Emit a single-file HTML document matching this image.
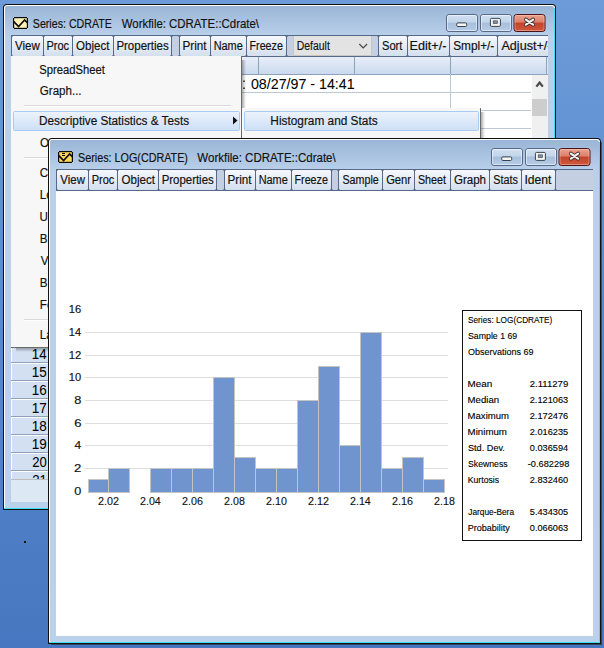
<!DOCTYPE html><html><head><meta charset="utf-8"><style>html,body{margin:0;padding:0;width:604px;height:648px;overflow:hidden;background:#5a8acd}svg{display:block}text{font-family:"Liberation Sans", sans-serif;white-space:pre}</style></head><body>
<svg width="604" height="648" viewBox="0 0 604 648">
<defs>
<linearGradient id="desk" x1="0" y1="0" x2="0" y2="1"><stop offset="0" stop-color="#6d9bd9"/><stop offset="1" stop-color="#4677c0"/></linearGradient>
<linearGradient id="frameg" x1="0" y1="0" x2="0" y2="1" gradientUnits="objectBoundingBox"><stop offset="0" stop-color="#9ab5d6"/><stop offset="0.06" stop-color="#b9d0ea"/><stop offset="1" stop-color="#b9d1ea"/></linearGradient>
<linearGradient id="capg" x1="0" y1="0" x2="0" y2="1"><stop offset="0" stop-color="#d3e1f1"/><stop offset="0.45" stop-color="#c2d5ea"/><stop offset="0.5" stop-color="#a6bfdc"/><stop offset="1" stop-color="#b7cce6"/></linearGradient>
<linearGradient id="closeg" x1="0" y1="0" x2="0" y2="1"><stop offset="0" stop-color="#eba592"/><stop offset="0.45" stop-color="#dd7f69"/><stop offset="0.5" stop-color="#c3432b"/><stop offset="1" stop-color="#cf5a3e"/></linearGradient>
<linearGradient id="btng" x1="0" y1="0" x2="0" y2="1"><stop offset="0" stop-color="#f6f8fc"/><stop offset="1" stop-color="#d2deed"/></linearGradient>
<linearGradient id="hdrg" x1="0" y1="0" x2="0" y2="1"><stop offset="0" stop-color="#e8eef8"/><stop offset="1" stop-color="#c8d8ee"/></linearGradient>
<linearGradient id="hig" x1="0" y1="0" x2="0" y2="1"><stop offset="0" stop-color="#edf3fc"/><stop offset="1" stop-color="#cddff6"/></linearGradient>
<linearGradient id="shadowr" x1="0" y1="0" x2="1" y2="0"><stop offset="0" stop-color="rgba(0,0,0,0.32)"/><stop offset="1" stop-color="rgba(0,0,0,0)"/></linearGradient>
<linearGradient id="shd" x1="0" y1="0" x2="0" y2="1"><stop offset="0" stop-color="rgba(0,0,0,0.3)"/><stop offset="1" stop-color="rgba(0,0,0,0)"/></linearGradient>
</defs>
<rect x="0" y="0" width="604" height="648" fill="url(#desk)" />
<rect x="24" y="541" width="2" height="2" fill="#111" />
<path d="M3 510 V8 Q3 4 7 4 H552 Q556 4 556 8 V510 Z" fill="#111"/>
<path d="M4 509 V8 Q4 5 7 5 H552 Q555 5 555 8 V509 Z" fill="#ffffff"/>
<rect x="554" y="8" width="1" height="501" fill="#3fe0f0" />
<rect x="4" y="508" width="551" height="1" fill="#3fe0f0" />
<path d="M5 508 V8 Q5 6 7 6 H551 Q554 6 554 8 V508 Z" fill="url(#frameg)"/>
<path d="M14 17 H27 V18 H28 V28 H27 V29 H14 V28 H13 V18 H14 Z" fill="#0a0a0a"/>
<rect x="14.2" y="18.2" width="12.6" height="9.6" fill="#fff3b6" />
<path d="M13.8 21.6 L18.6 26.6 L24.6 19.9 L27.2 22.6" fill="none" stroke="#0a0a0a" stroke-width="1.6" stroke-linejoin="miter"/>
<rect x="446.5" y="14.5" width="31.0" height="17" rx="2.5" fill="url(#capg)" stroke="#56698a" stroke-width="1"/>
<rect x="447.5" y="15.5" width="29.0" height="15" rx="1.5" fill="none" stroke="rgba(255,255,255,0.5)" stroke-width="1"/>
<rect x="480.5" y="14.5" width="31.0" height="17" rx="2.5" fill="url(#capg)" stroke="#56698a" stroke-width="1"/>
<rect x="481.5" y="15.5" width="29.0" height="15" rx="1.5" fill="none" stroke="rgba(255,255,255,0.5)" stroke-width="1"/>
<rect x="514" y="14.5" width="31" height="17" rx="2.5" fill="url(#closeg)" stroke="#4a1418" stroke-width="1"/>
<rect x="515" y="15.5" width="29" height="15" rx="1.5" fill="none" stroke="rgba(255,210,190,0.45)" stroke-width="1"/>
<rect x="456.7" y="22.9" width="10" height="3.6" rx="1.2" fill="#f4f4f0" stroke="#3a4250" stroke-width="1"/>
<rect x="490.4" y="18.4" width="10" height="8" rx="1.2" fill="#f4f4f0" stroke="#3a4250" stroke-width="1"/>
<rect x="493.2" y="20.8" width="4.4" height="2.8" fill="#7d90aa" stroke="#3a4250" stroke-width="0.6"/>
<path d="M525.9 19.6 L533.1 24.6 M533.1 19.6 L525.9 24.6" stroke="#40302e" stroke-width="3.8" stroke-linecap="round"/>
<path d="M525.9 19.6 L533.1 24.6 M533.1 19.6 L525.9 24.6" stroke="#f2f2f2" stroke-width="2.2" stroke-linecap="round"/>
<text x="32.82" y="27.9" font-size="12.5" fill="#111" stroke="#111" stroke-width="0.18" textLength="79.03" lengthAdjust="spacingAndGlyphs">Series: CDRATE</text>
<text x="121.74" y="27.9" font-size="12.5" fill="#111" stroke="#111" stroke-width="0.18" textLength="137.27" lengthAdjust="spacingAndGlyphs">Workfile: CDRATE::Cdrate\</text>
<clipPath id="tbc3"><rect x="11" y="35" width="537" height="22"/></clipPath><g clip-path="url(#tbc3)">
<rect x="11" y="35" width="537" height="22" fill="#c4d0e1" />
<rect x="12" y="36" width="31" height="21" fill="url(#btng)" />
<rect x="44" y="36" width="28" height="21" fill="url(#btng)" />
<rect x="73" y="36" width="40" height="21" fill="url(#btng)" />
<rect x="114" y="36" width="57" height="21" fill="url(#btng)" />
<rect x="180" y="36" width="30" height="21" fill="url(#btng)" />
<rect x="211" y="36" width="35" height="21" fill="url(#btng)" />
<rect x="247" y="36" width="39" height="21" fill="url(#btng)" />
<rect x="379" y="36" width="28" height="21" fill="url(#btng)" />
<rect x="408" y="36" width="41" height="21" fill="url(#btng)" />
<rect x="450" y="36" width="47" height="21" fill="url(#btng)" />
<rect x="498" y="36" width="102" height="21" fill="url(#btng)" />
<rect x="11" y="35" width="1" height="22" fill="#56698a" />
<rect x="10" y="36" width="3" height="1" fill="rgba(86,105,138,0.55)" />
<rect x="10" y="55" width="3" height="1" fill="rgba(86,105,138,0.55)" />
<rect x="43" y="35" width="1" height="22" fill="#56698a" />
<rect x="42" y="36" width="3" height="1" fill="rgba(86,105,138,0.55)" />
<rect x="42" y="55" width="3" height="1" fill="rgba(86,105,138,0.55)" />
<rect x="72" y="35" width="1" height="22" fill="#56698a" />
<rect x="71" y="36" width="3" height="1" fill="rgba(86,105,138,0.55)" />
<rect x="71" y="55" width="3" height="1" fill="rgba(86,105,138,0.55)" />
<rect x="113" y="35" width="1" height="22" fill="#56698a" />
<rect x="112" y="36" width="3" height="1" fill="rgba(86,105,138,0.55)" />
<rect x="112" y="55" width="3" height="1" fill="rgba(86,105,138,0.55)" />
<rect x="171" y="35" width="1" height="22" fill="#56698a" />
<rect x="170" y="36" width="3" height="1" fill="rgba(86,105,138,0.55)" />
<rect x="170" y="55" width="3" height="1" fill="rgba(86,105,138,0.55)" />
<rect x="179" y="35" width="1" height="22" fill="#56698a" />
<rect x="178" y="36" width="3" height="1" fill="rgba(86,105,138,0.55)" />
<rect x="178" y="55" width="3" height="1" fill="rgba(86,105,138,0.55)" />
<rect x="210" y="35" width="1" height="22" fill="#56698a" />
<rect x="209" y="36" width="3" height="1" fill="rgba(86,105,138,0.55)" />
<rect x="209" y="55" width="3" height="1" fill="rgba(86,105,138,0.55)" />
<rect x="246" y="35" width="1" height="22" fill="#56698a" />
<rect x="245" y="36" width="3" height="1" fill="rgba(86,105,138,0.55)" />
<rect x="245" y="55" width="3" height="1" fill="rgba(86,105,138,0.55)" />
<rect x="286" y="35" width="1" height="22" fill="#56698a" />
<rect x="285" y="36" width="3" height="1" fill="rgba(86,105,138,0.55)" />
<rect x="285" y="55" width="3" height="1" fill="rgba(86,105,138,0.55)" />
<rect x="378" y="35" width="1" height="22" fill="#56698a" />
<rect x="377" y="36" width="3" height="1" fill="rgba(86,105,138,0.55)" />
<rect x="377" y="55" width="3" height="1" fill="rgba(86,105,138,0.55)" />
<rect x="407" y="35" width="1" height="22" fill="#56698a" />
<rect x="406" y="36" width="3" height="1" fill="rgba(86,105,138,0.55)" />
<rect x="406" y="55" width="3" height="1" fill="rgba(86,105,138,0.55)" />
<rect x="449" y="35" width="1" height="22" fill="#56698a" />
<rect x="448" y="36" width="3" height="1" fill="rgba(86,105,138,0.55)" />
<rect x="448" y="55" width="3" height="1" fill="rgba(86,105,138,0.55)" />
<rect x="497" y="35" width="1" height="22" fill="#56698a" />
<rect x="496" y="36" width="3" height="1" fill="rgba(86,105,138,0.55)" />
<rect x="496" y="55" width="3" height="1" fill="rgba(86,105,138,0.55)" />
<rect x="11" y="35" width="537" height="1" fill="#56698a" />
<rect x="11" y="56" width="537" height="1" fill="#56698a" />
<text x="14.94" y="50" font-size="12" fill="#111" stroke="#111" stroke-width="0.18" textLength="24.85" lengthAdjust="spacingAndGlyphs">View</text>
<text x="46.42" y="50" font-size="12" fill="#111" stroke="#111" stroke-width="0.18" textLength="22.67" lengthAdjust="spacingAndGlyphs">Proc</text>
<text x="76.08" y="50" font-size="12" fill="#111" stroke="#111" stroke-width="0.18" textLength="33.28" lengthAdjust="spacingAndGlyphs">Object</text>
<text x="116.38" y="50" font-size="12" fill="#111" stroke="#111" stroke-width="0.18" textLength="52.35" lengthAdjust="spacingAndGlyphs">Properties</text>
<text x="182.47" y="50" font-size="12" fill="#111" stroke="#111" stroke-width="0.18" textLength="24.01" lengthAdjust="spacingAndGlyphs">Print</text>
<text x="213.63" y="50" font-size="12" fill="#111" stroke="#111" stroke-width="0.18" textLength="29.14" lengthAdjust="spacingAndGlyphs">Name</text>
<text x="249.54" y="50" font-size="12" fill="#111" stroke="#111" stroke-width="0.18" textLength="33.31" lengthAdjust="spacingAndGlyphs">Freeze</text>
<text x="382.00" y="50" font-size="12" fill="#111" stroke="#111" stroke-width="0.18" textLength="20.40" lengthAdjust="spacingAndGlyphs">Sort</text>
<text x="409.59" y="50" font-size="12" fill="#111" stroke="#111" stroke-width="0.18" textLength="36.85" lengthAdjust="spacingAndGlyphs">Edit+/-</text>
<text x="453.17" y="50" font-size="12" fill="#111" stroke="#111" stroke-width="0.18" textLength="41.14" lengthAdjust="spacingAndGlyphs">Smpl+/-</text>
<text x="501.44" y="50" font-size="12" fill="#111" stroke="#111" stroke-width="0.18" textLength="50.12" lengthAdjust="spacingAndGlyphs">Adjust+/-</text>
</g>
<rect x="293" y="36" width="79" height="20" fill="#c6c6c6" />
<rect x="294" y="36" width="77" height="19" fill="#e3e3e3" />
<text x="296.77" y="49.6" font-size="12" fill="#111" stroke="#111" stroke-width="0.15" textLength="33.02" lengthAdjust="spacingAndGlyphs">Default</text>
<path d="M359.3 44 L363.2 47.9 L367.1 44" fill="none" stroke="#444" stroke-width="1.1"/>
<rect x="11" y="57" width="537" height="445" fill="#dde8f5" />
<rect x="11" y="57" width="535" height="18" fill="url(#hdrg)" />
<rect x="66" y="57" width="1" height="18" fill="#8da2bd" />
<rect x="162" y="57" width="1" height="18" fill="#8da2bd" />
<rect x="258" y="57" width="1" height="18" fill="#8da2bd" />
<rect x="354" y="57" width="1" height="18" fill="#8da2bd" />
<rect x="450" y="57" width="1" height="18" fill="#8da2bd" />
<rect x="546" y="57" width="1" height="18" fill="#8da2bd" />
<rect x="11" y="74" width="537" height="1" fill="#8da2bd" />
<rect x="66" y="75" width="466" height="405" fill="#ffffff" />
<rect x="66" y="92" width="465" height="1" fill="#bcc8d6" />
<rect x="11" y="92" width="55" height="1" fill="#8ea0b8" />
<rect x="66" y="110" width="465" height="1" fill="#bcc8d6" />
<rect x="11" y="110" width="55" height="1" fill="#8ea0b8" />
<rect x="66" y="128" width="465" height="1" fill="#bcc8d6" />
<rect x="11" y="128" width="55" height="1" fill="#8ea0b8" />
<rect x="66" y="146" width="465" height="1" fill="#bcc8d6" />
<rect x="11" y="146" width="55" height="1" fill="#8ea0b8" />
<rect x="66" y="164" width="465" height="1" fill="#bcc8d6" />
<rect x="11" y="164" width="55" height="1" fill="#8ea0b8" />
<rect x="66" y="182" width="465" height="1" fill="#bcc8d6" />
<rect x="11" y="182" width="55" height="1" fill="#8ea0b8" />
<rect x="66" y="200" width="465" height="1" fill="#bcc8d6" />
<rect x="11" y="200" width="55" height="1" fill="#8ea0b8" />
<rect x="66" y="218" width="465" height="1" fill="#bcc8d6" />
<rect x="11" y="218" width="55" height="1" fill="#8ea0b8" />
<rect x="66" y="236" width="465" height="1" fill="#bcc8d6" />
<rect x="11" y="236" width="55" height="1" fill="#8ea0b8" />
<rect x="66" y="254" width="465" height="1" fill="#bcc8d6" />
<rect x="11" y="254" width="55" height="1" fill="#8ea0b8" />
<rect x="66" y="272" width="465" height="1" fill="#bcc8d6" />
<rect x="11" y="272" width="55" height="1" fill="#8ea0b8" />
<rect x="66" y="290" width="465" height="1" fill="#bcc8d6" />
<rect x="11" y="290" width="55" height="1" fill="#8ea0b8" />
<rect x="66" y="308" width="465" height="1" fill="#bcc8d6" />
<rect x="11" y="308" width="55" height="1" fill="#8ea0b8" />
<rect x="66" y="326" width="465" height="1" fill="#bcc8d6" />
<rect x="11" y="326" width="55" height="1" fill="#8ea0b8" />
<rect x="66" y="344" width="465" height="1" fill="#bcc8d6" />
<rect x="11" y="344" width="55" height="1" fill="#8ea0b8" />
<rect x="66" y="362" width="465" height="1" fill="#bcc8d6" />
<rect x="11" y="362" width="55" height="1" fill="#8ea0b8" />
<rect x="66" y="380" width="465" height="1" fill="#bcc8d6" />
<rect x="11" y="380" width="55" height="1" fill="#8ea0b8" />
<rect x="66" y="398" width="465" height="1" fill="#bcc8d6" />
<rect x="11" y="398" width="55" height="1" fill="#8ea0b8" />
<rect x="66" y="416" width="465" height="1" fill="#bcc8d6" />
<rect x="11" y="416" width="55" height="1" fill="#8ea0b8" />
<rect x="66" y="434" width="465" height="1" fill="#bcc8d6" />
<rect x="11" y="434" width="55" height="1" fill="#8ea0b8" />
<rect x="66" y="452" width="465" height="1" fill="#bcc8d6" />
<rect x="11" y="452" width="55" height="1" fill="#8ea0b8" />
<rect x="66" y="470" width="465" height="1" fill="#bcc8d6" />
<rect x="11" y="470" width="55" height="1" fill="#8ea0b8" />
<rect x="450" y="74" width="1" height="406" fill="#bcc8d6" />
<rect x="11" y="75" width="55" height="17" fill="#d3e0f2" />
<rect x="11" y="75" width="1" height="17" fill="#ffffff" />
<rect x="11" y="75" width="55" height="1" fill="#ffffff" />
<rect x="11" y="93" width="55" height="17" fill="#d3e0f2" />
<rect x="11" y="93" width="1" height="17" fill="#ffffff" />
<rect x="11" y="93" width="55" height="1" fill="#ffffff" />
<rect x="11" y="111" width="55" height="17" fill="#d3e0f2" />
<rect x="11" y="111" width="1" height="17" fill="#ffffff" />
<rect x="11" y="111" width="55" height="1" fill="#ffffff" />
<rect x="11" y="129" width="55" height="17" fill="#d3e0f2" />
<rect x="11" y="129" width="1" height="17" fill="#ffffff" />
<rect x="11" y="129" width="55" height="1" fill="#ffffff" />
<rect x="11" y="147" width="55" height="17" fill="#d3e0f2" />
<rect x="11" y="147" width="1" height="17" fill="#ffffff" />
<rect x="11" y="147" width="55" height="1" fill="#ffffff" />
<rect x="11" y="165" width="55" height="17" fill="#d3e0f2" />
<rect x="11" y="165" width="1" height="17" fill="#ffffff" />
<rect x="11" y="165" width="55" height="1" fill="#ffffff" />
<rect x="11" y="183" width="55" height="17" fill="#d3e0f2" />
<rect x="11" y="183" width="1" height="17" fill="#ffffff" />
<rect x="11" y="183" width="55" height="1" fill="#ffffff" />
<rect x="11" y="201" width="55" height="17" fill="#d3e0f2" />
<rect x="11" y="201" width="1" height="17" fill="#ffffff" />
<rect x="11" y="201" width="55" height="1" fill="#ffffff" />
<rect x="11" y="219" width="55" height="17" fill="#d3e0f2" />
<rect x="11" y="219" width="1" height="17" fill="#ffffff" />
<rect x="11" y="219" width="55" height="1" fill="#ffffff" />
<rect x="11" y="237" width="55" height="17" fill="#d3e0f2" />
<rect x="11" y="237" width="1" height="17" fill="#ffffff" />
<rect x="11" y="237" width="55" height="1" fill="#ffffff" />
<rect x="11" y="255" width="55" height="17" fill="#d3e0f2" />
<rect x="11" y="255" width="1" height="17" fill="#ffffff" />
<rect x="11" y="255" width="55" height="1" fill="#ffffff" />
<rect x="11" y="273" width="55" height="17" fill="#d3e0f2" />
<rect x="11" y="273" width="1" height="17" fill="#ffffff" />
<rect x="11" y="273" width="55" height="1" fill="#ffffff" />
<rect x="11" y="291" width="55" height="17" fill="#d3e0f2" />
<rect x="11" y="291" width="1" height="17" fill="#ffffff" />
<rect x="11" y="291" width="55" height="1" fill="#ffffff" />
<rect x="11" y="309" width="55" height="17" fill="#d3e0f2" />
<rect x="11" y="309" width="1" height="17" fill="#ffffff" />
<rect x="11" y="309" width="55" height="1" fill="#ffffff" />
<rect x="11" y="327" width="55" height="17" fill="#d3e0f2" />
<rect x="11" y="327" width="1" height="17" fill="#ffffff" />
<rect x="11" y="327" width="55" height="1" fill="#ffffff" />
<rect x="11" y="345" width="55" height="17" fill="#d3e0f2" />
<rect x="11" y="345" width="1" height="17" fill="#ffffff" />
<rect x="11" y="345" width="55" height="1" fill="#ffffff" />
<rect x="11" y="363" width="55" height="17" fill="#d3e0f2" />
<rect x="11" y="363" width="1" height="17" fill="#ffffff" />
<rect x="11" y="363" width="55" height="1" fill="#ffffff" />
<rect x="11" y="381" width="55" height="17" fill="#d3e0f2" />
<rect x="11" y="381" width="1" height="17" fill="#ffffff" />
<rect x="11" y="381" width="55" height="1" fill="#ffffff" />
<rect x="11" y="399" width="55" height="17" fill="#d3e0f2" />
<rect x="11" y="399" width="1" height="17" fill="#ffffff" />
<rect x="11" y="399" width="55" height="1" fill="#ffffff" />
<rect x="11" y="417" width="55" height="17" fill="#d3e0f2" />
<rect x="11" y="417" width="1" height="17" fill="#ffffff" />
<rect x="11" y="417" width="55" height="1" fill="#ffffff" />
<rect x="11" y="435" width="55" height="17" fill="#d3e0f2" />
<rect x="11" y="435" width="1" height="17" fill="#ffffff" />
<rect x="11" y="435" width="55" height="1" fill="#ffffff" />
<rect x="11" y="453" width="55" height="17" fill="#d3e0f2" />
<rect x="11" y="453" width="1" height="17" fill="#ffffff" />
<rect x="11" y="453" width="55" height="1" fill="#ffffff" />
<rect x="11" y="471" width="55" height="17" fill="#d3e0f2" />
<rect x="11" y="471" width="1" height="17" fill="#ffffff" />
<rect x="11" y="471" width="55" height="1" fill="#ffffff" />
<text x="31.80" y="358.8" font-size="15" fill="#000" stroke="#000" stroke-width="0.05" textLength="14.76" lengthAdjust="spacingAndGlyphs">14</text>
<text x="31.79" y="376.8" font-size="15" fill="#000" stroke="#000" stroke-width="0.05" textLength="14.98" lengthAdjust="spacingAndGlyphs">15</text>
<text x="31.79" y="394.8" font-size="15" fill="#000" stroke="#000" stroke-width="0.05" textLength="14.98" lengthAdjust="spacingAndGlyphs">16</text>
<text x="31.78" y="412.8" font-size="15" fill="#000" stroke="#000" stroke-width="0.05" textLength="15.13" lengthAdjust="spacingAndGlyphs">17</text>
<text x="31.79" y="430.8" font-size="15" fill="#000" stroke="#000" stroke-width="0.05" textLength="14.98" lengthAdjust="spacingAndGlyphs">18</text>
<text x="31.78" y="448.8" font-size="15" fill="#000" stroke="#000" stroke-width="0.05" textLength="15.06" lengthAdjust="spacingAndGlyphs">19</text>
<text x="32.15" y="466.8" font-size="15" fill="#000" stroke="#000" stroke-width="0.05" textLength="14.54" lengthAdjust="spacingAndGlyphs">20</text>
<text x="32.14" y="484.8" font-size="15" fill="#000" stroke="#000" stroke-width="0.05" textLength="14.69" lengthAdjust="spacingAndGlyphs">21</text>
<rect x="11" y="480" width="537" height="22" fill="#dde8f5" />
<rect x="11" y="479" width="537" height="1" fill="#c0bcb8" />
<text x="250.93" y="89" font-size="15" fill="#000" stroke="#000" stroke-width="0.05" textLength="103.76" lengthAdjust="spacingAndGlyphs">08/27/97 - 14:41</text>
<rect x="243.3" y="80.5" width="1.5" height="1.5" fill="#222" />
<rect x="243.3" y="87.5" width="1.5" height="1.5" fill="#222" />
<rect x="532" y="75" width="16" height="405" fill="#f0f0f0" />
<path d="M536.4 86.6 L539.6 82.6 L542.8 86.6" fill="none" stroke="#4a4a4a" stroke-width="2.3" stroke-linejoin="miter"/>
<rect x="532" y="99" width="15" height="17" fill="#cdcdcd" />
<rect x="11" y="56" width="230" height="291" fill="#f7f7f7" />
<rect x="241" y="56" width="1" height="291" fill="#6a6a6a" />
<rect x="242" y="60" width="4" height="287" fill="url(#shadowr)" />
<rect x="11" y="347" width="231" height="1" fill="#6a6a6a" />
<rect x="16" y="348" width="230" height="4" fill="url(#shd)" />
<rect x="24" y="105" width="207" height="1" fill="#d9d9d9" />
<rect x="24" y="106" width="207" height="1" fill="#ffffff" />
<rect x="24" y="157" width="207" height="1" fill="#d9d9d9" />
<rect x="24" y="158" width="207" height="1" fill="#ffffff" />
<rect x="24" y="319" width="207" height="1" fill="#d9d9d9" />
<rect x="24" y="320" width="207" height="1" fill="#ffffff" />
<rect x="13.5" y="111.5" width="226" height="19" rx="1" fill="url(#hig)" stroke="#a9cbf2"/>
<path d="M233 116.5 L237.5 120.5 L233 124.5 Z" fill="#111"/>
<text x="39.29" y="73.5" font-size="12.5" fill="#111" stroke="#111" stroke-width="0.18" textLength="65.59" lengthAdjust="spacingAndGlyphs">SpreadSheet</text>
<text x="39.82" y="95.4" font-size="12.5" fill="#111" stroke="#111" stroke-width="0.18" textLength="41.75" lengthAdjust="spacingAndGlyphs">Graph...</text>
<text x="39.06" y="124.9" font-size="12.5" fill="#111" stroke="#111" stroke-width="0.18" textLength="149.99" lengthAdjust="spacingAndGlyphs">Descriptive Statistics &amp; Tests</text>
<text x="39.88" y="147" font-size="12.5" fill="#111" stroke="#111" stroke-width="0.18" textLength="114.37" lengthAdjust="spacingAndGlyphs">One-Way Tabulation...</text>
<text x="39.82" y="176.7" font-size="12.5" fill="#111" stroke="#111" stroke-width="0.18" textLength="74.29" lengthAdjust="spacingAndGlyphs">Correlogram...</text>
<text x="39.87" y="199" font-size="12.5" fill="#111" stroke="#111" stroke-width="0.18" textLength="104.47" lengthAdjust="spacingAndGlyphs">Long-run Variance...</text>
<text x="39.53" y="221" font-size="12.5" fill="#111" stroke="#111" stroke-width="0.18" textLength="82.49" lengthAdjust="spacingAndGlyphs">Unit Root Test...</text>
<text x="39.87" y="243" font-size="12.5" fill="#111" stroke="#111" stroke-width="0.18" textLength="141.29" lengthAdjust="spacingAndGlyphs">Breakpoint Unit Root Test...</text>
<text x="40.74" y="265" font-size="12.5" fill="#111" stroke="#111" stroke-width="0.18" textLength="109.42" lengthAdjust="spacingAndGlyphs">Variance Ratio Test...</text>
<text x="39.87" y="287" font-size="12.5" fill="#111" stroke="#111" stroke-width="0.18" textLength="134.86" lengthAdjust="spacingAndGlyphs">BDS Independence Test...</text>
<text x="39.87" y="309" font-size="12.5" fill="#111" stroke="#111" stroke-width="0.18" textLength="112.43" lengthAdjust="spacingAndGlyphs">Forecast Evaluation...</text>
<text x="39.87" y="339" font-size="12.5" fill="#111" stroke="#111" stroke-width="0.18" textLength="28.44" lengthAdjust="spacingAndGlyphs">Label</text>
<rect x="242" y="108" width="238" height="30" fill="#f7f7f7" />
<rect x="480" y="108" width="1" height="30" fill="#6a6a6a" />
<rect x="481" y="112" width="4" height="26" fill="url(#shadowr)" />
<rect x="244.5" y="111.5" width="234" height="19" rx="1" fill="url(#hig)" stroke="#a9cbf2"/>
<text x="270.35" y="124.9" font-size="12.5" fill="#111" stroke="#111" stroke-width="0.18" textLength="107.26" lengthAdjust="spacingAndGlyphs">Histogram and Stats</text>
<rect x="601" y="142" width="1" height="503" fill="rgba(40,30,20,0.55)" />
<rect x="51" y="644" width="551" height="1" fill="rgba(40,30,20,0.55)" />
<path d="M48 644 V142 Q48 138 52 138 H597 Q601 138 601 142 V644 Z" fill="#111"/>
<path d="M49 643 V142 Q49 139 52 139 H597 Q600 139 600 142 V643 Z" fill="#ffffff"/>
<rect x="599" y="142" width="1" height="501" fill="#3fe0f0" />
<rect x="49" y="642" width="551" height="1" fill="#3fe0f0" />
<path d="M50 642 V142 Q50 140 52 140 H596 Q599 140 599 142 V642 Z" fill="url(#frameg)"/>
<path d="M59 151 H72 V152 H73 V162 H72 V163 H59 V162 H58 V152 H59 Z" fill="#0a0a0a"/>
<rect x="59.2" y="152.2" width="12.6" height="9.6" fill="#fdd856" />
<path d="M58.8 155.6 L63.6 160.6 L69.6 153.9 L72.2 156.6" fill="none" stroke="#0a0a0a" stroke-width="1.6" stroke-linejoin="miter"/>
<rect x="62" y="153" width="3" height="1" fill="#0a0a0a" />
<rect x="62" y="155" width="3" height="1" fill="#0a0a0a" />
<rect x="491.5" y="148.5" width="31.0" height="17" rx="2.5" fill="url(#capg)" stroke="#56698a" stroke-width="1"/>
<rect x="492.5" y="149.5" width="29.0" height="15" rx="1.5" fill="none" stroke="rgba(255,255,255,0.5)" stroke-width="1"/>
<rect x="525.5" y="148.5" width="31.0" height="17" rx="2.5" fill="url(#capg)" stroke="#56698a" stroke-width="1"/>
<rect x="526.5" y="149.5" width="29.0" height="15" rx="1.5" fill="none" stroke="rgba(255,255,255,0.5)" stroke-width="1"/>
<rect x="559" y="148.5" width="31" height="17" rx="2.5" fill="url(#closeg)" stroke="#4a1418" stroke-width="1"/>
<rect x="560" y="149.5" width="29" height="15" rx="1.5" fill="none" stroke="rgba(255,210,190,0.45)" stroke-width="1"/>
<rect x="501.7" y="156.9" width="10" height="3.6" rx="1.2" fill="#f4f4f0" stroke="#3a4250" stroke-width="1"/>
<rect x="535.4" y="152.4" width="10" height="8" rx="1.2" fill="#f4f4f0" stroke="#3a4250" stroke-width="1"/>
<rect x="538.2" y="154.8" width="4.4" height="2.8" fill="#7d90aa" stroke="#3a4250" stroke-width="0.6"/>
<path d="M570.9 153.6 L578.1 158.6 M578.1 153.6 L570.9 158.6" stroke="#40302e" stroke-width="3.8" stroke-linecap="round"/>
<path d="M570.9 153.6 L578.1 158.6 M578.1 153.6 L570.9 158.6" stroke="#f2f2f2" stroke-width="2.2" stroke-linecap="round"/>
<text x="78.12" y="162.2" font-size="12.5" fill="#111" stroke="#111" stroke-width="0.18" textLength="109.83" lengthAdjust="spacingAndGlyphs">Series: LOG(CDRATE)</text>
<text x="197.34" y="162.2" font-size="12.5" fill="#111" stroke="#111" stroke-width="0.18" textLength="138.37" lengthAdjust="spacingAndGlyphs">Workfile: CDRATE::Cdrate\</text>
<clipPath id="tbc48"><rect x="56" y="169" width="537" height="22"/></clipPath><g clip-path="url(#tbc48)">
<rect x="56" y="169" width="537" height="22" fill="#c4d0e1" />
<rect x="57" y="170" width="31" height="21" fill="url(#btng)" />
<rect x="89" y="170" width="28" height="21" fill="url(#btng)" />
<rect x="118" y="170" width="40" height="21" fill="url(#btng)" />
<rect x="159" y="170" width="57" height="21" fill="url(#btng)" />
<rect x="225" y="170" width="30" height="21" fill="url(#btng)" />
<rect x="256" y="170" width="35" height="21" fill="url(#btng)" />
<rect x="292" y="170" width="39" height="21" fill="url(#btng)" />
<rect x="339" y="170" width="43" height="21" fill="url(#btng)" />
<rect x="383" y="170" width="31" height="21" fill="url(#btng)" />
<rect x="415" y="170" width="35" height="21" fill="url(#btng)" />
<rect x="451" y="170" width="38" height="21" fill="url(#btng)" />
<rect x="490" y="170" width="31" height="21" fill="url(#btng)" />
<rect x="522" y="170" width="33" height="21" fill="url(#btng)" />
<rect x="56" y="169" width="1" height="22" fill="#56698a" />
<rect x="55" y="170" width="3" height="1" fill="rgba(86,105,138,0.55)" />
<rect x="55" y="189" width="3" height="1" fill="rgba(86,105,138,0.55)" />
<rect x="88" y="169" width="1" height="22" fill="#56698a" />
<rect x="87" y="170" width="3" height="1" fill="rgba(86,105,138,0.55)" />
<rect x="87" y="189" width="3" height="1" fill="rgba(86,105,138,0.55)" />
<rect x="117" y="169" width="1" height="22" fill="#56698a" />
<rect x="116" y="170" width="3" height="1" fill="rgba(86,105,138,0.55)" />
<rect x="116" y="189" width="3" height="1" fill="rgba(86,105,138,0.55)" />
<rect x="158" y="169" width="1" height="22" fill="#56698a" />
<rect x="157" y="170" width="3" height="1" fill="rgba(86,105,138,0.55)" />
<rect x="157" y="189" width="3" height="1" fill="rgba(86,105,138,0.55)" />
<rect x="216" y="169" width="1" height="22" fill="#56698a" />
<rect x="215" y="170" width="3" height="1" fill="rgba(86,105,138,0.55)" />
<rect x="215" y="189" width="3" height="1" fill="rgba(86,105,138,0.55)" />
<rect x="224" y="169" width="1" height="22" fill="#56698a" />
<rect x="223" y="170" width="3" height="1" fill="rgba(86,105,138,0.55)" />
<rect x="223" y="189" width="3" height="1" fill="rgba(86,105,138,0.55)" />
<rect x="255" y="169" width="1" height="22" fill="#56698a" />
<rect x="254" y="170" width="3" height="1" fill="rgba(86,105,138,0.55)" />
<rect x="254" y="189" width="3" height="1" fill="rgba(86,105,138,0.55)" />
<rect x="291" y="169" width="1" height="22" fill="#56698a" />
<rect x="290" y="170" width="3" height="1" fill="rgba(86,105,138,0.55)" />
<rect x="290" y="189" width="3" height="1" fill="rgba(86,105,138,0.55)" />
<rect x="331" y="169" width="1" height="22" fill="#56698a" />
<rect x="330" y="170" width="3" height="1" fill="rgba(86,105,138,0.55)" />
<rect x="330" y="189" width="3" height="1" fill="rgba(86,105,138,0.55)" />
<rect x="338" y="169" width="1" height="22" fill="#56698a" />
<rect x="337" y="170" width="3" height="1" fill="rgba(86,105,138,0.55)" />
<rect x="337" y="189" width="3" height="1" fill="rgba(86,105,138,0.55)" />
<rect x="382" y="169" width="1" height="22" fill="#56698a" />
<rect x="381" y="170" width="3" height="1" fill="rgba(86,105,138,0.55)" />
<rect x="381" y="189" width="3" height="1" fill="rgba(86,105,138,0.55)" />
<rect x="414" y="169" width="1" height="22" fill="#56698a" />
<rect x="413" y="170" width="3" height="1" fill="rgba(86,105,138,0.55)" />
<rect x="413" y="189" width="3" height="1" fill="rgba(86,105,138,0.55)" />
<rect x="450" y="169" width="1" height="22" fill="#56698a" />
<rect x="449" y="170" width="3" height="1" fill="rgba(86,105,138,0.55)" />
<rect x="449" y="189" width="3" height="1" fill="rgba(86,105,138,0.55)" />
<rect x="489" y="169" width="1" height="22" fill="#56698a" />
<rect x="488" y="170" width="3" height="1" fill="rgba(86,105,138,0.55)" />
<rect x="488" y="189" width="3" height="1" fill="rgba(86,105,138,0.55)" />
<rect x="521" y="169" width="1" height="22" fill="#56698a" />
<rect x="520" y="170" width="3" height="1" fill="rgba(86,105,138,0.55)" />
<rect x="520" y="189" width="3" height="1" fill="rgba(86,105,138,0.55)" />
<rect x="555" y="169" width="1" height="22" fill="#56698a" />
<rect x="554" y="170" width="3" height="1" fill="rgba(86,105,138,0.55)" />
<rect x="554" y="189" width="3" height="1" fill="rgba(86,105,138,0.55)" />
<rect x="56" y="169" width="537" height="1" fill="#56698a" />
<rect x="56" y="190" width="537" height="1" fill="#56698a" />
<text x="60.34" y="184" font-size="12" fill="#111" stroke="#111" stroke-width="0.18" textLength="24.55" lengthAdjust="spacingAndGlyphs">View</text>
<text x="91.72" y="184" font-size="12" fill="#111" stroke="#111" stroke-width="0.18" textLength="22.57" lengthAdjust="spacingAndGlyphs">Proc</text>
<text x="121.58" y="184" font-size="12" fill="#111" stroke="#111" stroke-width="0.18" textLength="33.38" lengthAdjust="spacingAndGlyphs">Object</text>
<text x="161.69" y="184" font-size="12" fill="#111" stroke="#111" stroke-width="0.18" textLength="52.04" lengthAdjust="spacingAndGlyphs">Properties</text>
<text x="227.47" y="184" font-size="12" fill="#111" stroke="#111" stroke-width="0.18" textLength="24.01" lengthAdjust="spacingAndGlyphs">Print</text>
<text x="258.63" y="184" font-size="12" fill="#111" stroke="#111" stroke-width="0.18" textLength="29.14" lengthAdjust="spacingAndGlyphs">Name</text>
<text x="294.54" y="184" font-size="12" fill="#111" stroke="#111" stroke-width="0.18" textLength="33.31" lengthAdjust="spacingAndGlyphs">Freeze</text>
<text x="342.42" y="184" font-size="12" fill="#111" stroke="#111" stroke-width="0.18" textLength="36.37" lengthAdjust="spacingAndGlyphs">Sample</text>
<text x="386.14" y="184" font-size="12" fill="#111" stroke="#111" stroke-width="0.18" textLength="24.97" lengthAdjust="spacingAndGlyphs">Genr</text>
<text x="417.92" y="184" font-size="12" fill="#111" stroke="#111" stroke-width="0.18" textLength="28.07" lengthAdjust="spacingAndGlyphs">Sheet</text>
<text x="453.92" y="184" font-size="12" fill="#111" stroke="#111" stroke-width="0.18" textLength="32.12" lengthAdjust="spacingAndGlyphs">Graph</text>
<text x="493.21" y="184" font-size="12" fill="#111" stroke="#111" stroke-width="0.18" textLength="24.71" lengthAdjust="spacingAndGlyphs">Stats</text>
<text x="524.41" y="184" font-size="12" fill="#111" stroke="#111" stroke-width="0.18" textLength="27.00" lengthAdjust="spacingAndGlyphs">Ident</text>
</g>
<rect x="56" y="191" width="537" height="445" fill="#ffffff" />
<rect x="85" y="468" width="363" height="1" fill="#dedede" />
<rect x="85" y="445" width="363" height="1" fill="#dedede" />
<rect x="85" y="423" width="363" height="1" fill="#dedede" />
<rect x="85" y="400" width="363" height="1" fill="#dedede" />
<rect x="85" y="377" width="363" height="1" fill="#dedede" />
<rect x="85" y="355" width="363" height="1" fill="#dedede" />
<rect x="85" y="332" width="363" height="1" fill="#dedede" />
<rect x="88.5" y="479.5" width="20" height="13" fill="#7094cd" stroke="#c4c4c4" stroke-width="1"/>
<rect x="108.5" y="468.5" width="21" height="24" fill="#7094cd" stroke="#c4c4c4" stroke-width="1"/>
<rect x="150.5" y="468.5" width="21" height="24" fill="#7094cd" stroke="#c4c4c4" stroke-width="1"/>
<rect x="171.5" y="468.5" width="21" height="24" fill="#7094cd" stroke="#c4c4c4" stroke-width="1"/>
<rect x="192.5" y="468.5" width="21" height="24" fill="#7094cd" stroke="#c4c4c4" stroke-width="1"/>
<rect x="213.5" y="377.5" width="21" height="115" fill="#7094cd" stroke="#c4c4c4" stroke-width="1"/>
<rect x="234.5" y="457.5" width="21" height="35" fill="#7094cd" stroke="#c4c4c4" stroke-width="1"/>
<rect x="255.5" y="468.5" width="21" height="24" fill="#7094cd" stroke="#c4c4c4" stroke-width="1"/>
<rect x="276.5" y="468.5" width="21" height="24" fill="#7094cd" stroke="#c4c4c4" stroke-width="1"/>
<rect x="297.5" y="400.5" width="21" height="92" fill="#7094cd" stroke="#c4c4c4" stroke-width="1"/>
<rect x="318.5" y="366.5" width="21" height="126" fill="#7094cd" stroke="#c4c4c4" stroke-width="1"/>
<rect x="339.5" y="445.5" width="21" height="47" fill="#7094cd" stroke="#c4c4c4" stroke-width="1"/>
<rect x="360.5" y="332.5" width="21" height="160" fill="#7094cd" stroke="#c4c4c4" stroke-width="1"/>
<rect x="381.5" y="468.5" width="21" height="24" fill="#7094cd" stroke="#c4c4c4" stroke-width="1"/>
<rect x="402.5" y="457.5" width="21" height="35" fill="#7094cd" stroke="#c4c4c4" stroke-width="1"/>
<rect x="423.5" y="479.5" width="21" height="13" fill="#7094cd" stroke="#c4c4c4" stroke-width="1"/>
<text x="74.29" y="494.6" font-size="10.5" fill="#111" stroke="#111" stroke-width="0.15" textLength="7.03" lengthAdjust="spacingAndGlyphs">0</text>
<text x="74.14" y="471.6" font-size="10.5" fill="#111" stroke="#111" stroke-width="0.15" textLength="7.33" lengthAdjust="spacingAndGlyphs">2</text>
<text x="74.50" y="448.6" font-size="10.5" fill="#111" stroke="#111" stroke-width="0.15" textLength="6.67" lengthAdjust="spacingAndGlyphs">4</text>
<text x="74.15" y="426.6" font-size="10.5" fill="#111" stroke="#111" stroke-width="0.15" textLength="7.25" lengthAdjust="spacingAndGlyphs">6</text>
<text x="74.23" y="403.6" font-size="10.5" fill="#111" stroke="#111" stroke-width="0.15" textLength="7.10" lengthAdjust="spacingAndGlyphs">8</text>
<text x="68.87" y="380.6" font-size="10.5" fill="#111" stroke="#111" stroke-width="0.15" textLength="12.35" lengthAdjust="spacingAndGlyphs">10</text>
<text x="68.85" y="358.6" font-size="10.5" fill="#111" stroke="#111" stroke-width="0.15" textLength="12.54" lengthAdjust="spacingAndGlyphs">12</text>
<text x="68.88" y="335.6" font-size="10.5" fill="#111" stroke="#111" stroke-width="0.15" textLength="12.22" lengthAdjust="spacingAndGlyphs">14</text>
<text x="68.86" y="312.6" font-size="10.5" fill="#111" stroke="#111" stroke-width="0.15" textLength="12.41" lengthAdjust="spacingAndGlyphs">16</text>
<text x="98.06" y="505" font-size="10" fill="#111" stroke="#111" stroke-width="0.12" textLength="20.89" lengthAdjust="spacingAndGlyphs">2.02</text>
<text x="140.07" y="505" font-size="10" fill="#111" stroke="#111" stroke-width="0.12" textLength="20.66" lengthAdjust="spacingAndGlyphs">2.04</text>
<text x="182.06" y="505" font-size="10" fill="#111" stroke="#111" stroke-width="0.12" textLength="20.83" lengthAdjust="spacingAndGlyphs">2.06</text>
<text x="224.07" y="505" font-size="10" fill="#111" stroke="#111" stroke-width="0.12" textLength="20.77" lengthAdjust="spacingAndGlyphs">2.08</text>
<text x="266.07" y="505" font-size="10" fill="#111" stroke="#111" stroke-width="0.12" textLength="20.77" lengthAdjust="spacingAndGlyphs">2.10</text>
<text x="308.06" y="505" font-size="10" fill="#111" stroke="#111" stroke-width="0.12" textLength="20.89" lengthAdjust="spacingAndGlyphs">2.12</text>
<text x="350.07" y="505" font-size="10" fill="#111" stroke="#111" stroke-width="0.12" textLength="20.66" lengthAdjust="spacingAndGlyphs">2.14</text>
<text x="392.06" y="505" font-size="10" fill="#111" stroke="#111" stroke-width="0.12" textLength="20.83" lengthAdjust="spacingAndGlyphs">2.16</text>
<text x="434.07" y="505" font-size="10" fill="#111" stroke="#111" stroke-width="0.12" textLength="20.77" lengthAdjust="spacingAndGlyphs">2.18</text>
<rect x="462.5" y="310.5" width="119" height="230" fill="#fff" stroke="#111"/>
<text x="468.03" y="322.9" font-size="8.6" fill="#000" stroke="#000" stroke-width="0.12" textLength="84.27" lengthAdjust="spacingAndGlyphs">Series: LOG(CDRATE)</text>
<text x="468.01" y="338.87" font-size="8.6" fill="#000" stroke="#000" stroke-width="0.12" textLength="49.23" lengthAdjust="spacingAndGlyphs">Sample 1 69</text>
<text x="467.99" y="354.84" font-size="8.6" fill="#000" stroke="#000" stroke-width="0.12" textLength="65.63" lengthAdjust="spacingAndGlyphs">Observations 69</text>
<text x="467.61" y="386.78" font-size="8.6" fill="#000" stroke="#000" stroke-width="0.12" textLength="24.64" lengthAdjust="spacingAndGlyphs">Mean</text>
<text x="529.72" y="386.78" font-size="8.6" fill="#000" stroke="#000" stroke-width="0.12" textLength="38.53" lengthAdjust="spacingAndGlyphs">2.111279</text>
<text x="467.63" y="402.75" font-size="8.6" fill="#000" stroke="#000" stroke-width="0.12" textLength="31.49" lengthAdjust="spacingAndGlyphs">Median</text>
<text x="529.74" y="402.75" font-size="8.6" fill="#000" stroke="#000" stroke-width="0.12" textLength="38.49" lengthAdjust="spacingAndGlyphs">2.121063</text>
<text x="467.64" y="418.72" font-size="8.6" fill="#000" stroke="#000" stroke-width="0.12" textLength="41.32" lengthAdjust="spacingAndGlyphs">Maximum</text>
<text x="529.74" y="418.72" font-size="8.6" fill="#000" stroke="#000" stroke-width="0.12" textLength="38.49" lengthAdjust="spacingAndGlyphs">2.172476</text>
<text x="467.62" y="434.69" font-size="8.6" fill="#000" stroke="#000" stroke-width="0.12" textLength="39.31" lengthAdjust="spacingAndGlyphs">Minimum</text>
<text x="529.74" y="434.69" font-size="8.6" fill="#000" stroke="#000" stroke-width="0.12" textLength="38.44" lengthAdjust="spacingAndGlyphs">2.016235</text>
<text x="467.99" y="450.66" font-size="8.6" fill="#000" stroke="#000" stroke-width="0.12" textLength="36.92" lengthAdjust="spacingAndGlyphs">Std. Dev.</text>
<text x="529.83" y="450.66" font-size="8.6" fill="#000" stroke="#000" stroke-width="0.12" textLength="38.25" lengthAdjust="spacingAndGlyphs">0.036594</text>
<text x="468.01" y="466.63" font-size="8.6" fill="#000" stroke="#000" stroke-width="0.12" textLength="39.62" lengthAdjust="spacingAndGlyphs">Skewness</text>
<text x="527.79" y="466.63" font-size="8.6" fill="#000" stroke="#000" stroke-width="0.12" textLength="41.52" lengthAdjust="spacingAndGlyphs">-0.682298</text>
<text x="467.70" y="482.6" font-size="8.6" fill="#000" stroke="#000" stroke-width="0.12" textLength="31.42" lengthAdjust="spacingAndGlyphs">Kurtosis</text>
<text x="529.74" y="482.6" font-size="8.6" fill="#000" stroke="#000" stroke-width="0.12" textLength="38.44" lengthAdjust="spacingAndGlyphs">2.832460</text>
<text x="468.28" y="514.54" font-size="8.6" fill="#000" stroke="#000" stroke-width="0.12" textLength="45.75" lengthAdjust="spacingAndGlyphs">Jarque-Bera</text>
<text x="529.83" y="514.54" font-size="8.6" fill="#000" stroke="#000" stroke-width="0.12" textLength="38.34" lengthAdjust="spacingAndGlyphs">5.434305</text>
<text x="467.68" y="530.51" font-size="8.6" fill="#000" stroke="#000" stroke-width="0.12" textLength="42.06" lengthAdjust="spacingAndGlyphs">Probability</text>
<text x="529.83" y="530.51" font-size="8.6" fill="#000" stroke="#000" stroke-width="0.12" textLength="38.39" lengthAdjust="spacingAndGlyphs">0.066063</text>
</svg></body></html>
